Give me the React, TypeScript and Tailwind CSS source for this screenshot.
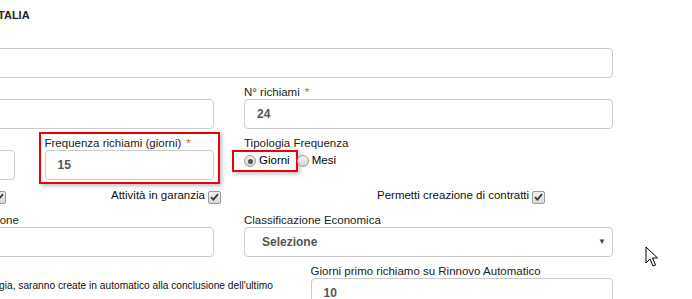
import React from 'react';

const Label = ({ children, req }: { children: React.ReactNode; req?: boolean }) => (
  <div className="text-[11.5px] leading-[14px] text-[#222] whitespace-nowrap">
    {children}
    {req && <span className="ml-[5px] text-[#f0474b]">*</span>}
  </div>
);

const Field = ({ value = '' }: { value?: string }) => (
  <input
    readOnly
    value={value}
    className="block w-full h-[30px] border border-[#ccc] rounded-[4px] bg-white px-[12px] text-[12px] font-bold text-[#555] outline-none"
  />
);

const Check = () => (
  <span className="inline-flex items-center justify-center w-[13px] h-[13px] border border-[#9a9a9a] rounded-[2px] bg-gradient-to-b from-[#f2f2f2] to-[#d8d8d8] align-[-2px] ml-[3px]">
    <svg width="9" height="8" viewBox="0 0 9 8">
      <path d="M1 4.2 L3.4 6.6 L8 1.2" fill="none" stroke="#3a3a3a" strokeWidth="1.8" />
    </svg>
  </span>
);

const Radio = ({ on }: { on?: boolean }) => (
  <span className="inline-flex items-center justify-center w-[12px] h-[12px] rounded-full border border-[#9a9a9a] bg-gradient-to-b from-[#f4f4f4] to-[#d6d6d6]">
    {on && <span className="w-[5px] h-[5px] rounded-full bg-[#555]" />}
  </span>
);

export default function App() {
  return (
    <div className="relative w-[692px] h-[299px] overflow-hidden bg-white font-['Liberation_Sans',Arial,sans-serif]">
      <div className="ml-[-170px] w-[798px]">
        {/* intestazione */}
        <div className="h-[48px] pt-[7px] pl-[165px] text-[11px] font-bold text-[#222]">ITALIA</div>

        <div className="px-[15px]">
          <Field />
        </div>

        <div className="grid grid-cols-12 mt-[7px]">
          <div className="col-span-6 px-[15px]">
            <Label>Descrizione</Label>
            <Field />
          </div>
          <div className="col-span-6 px-[15px]">
            <Label req>N° richiami</Label>
            <Field value="24" />
          </div>
        </div>

        <div className="grid grid-cols-12 mt-[7px]">
          <div className="col-span-3 px-[15px]">
            <Label>Durata</Label>
            <Field />
          </div>
          <div className="col-span-3 px-[15px]">
            <div className="-mx-[6px] -mt-[4px] px-[4px] pt-[2px] pb-[2px] border-2 border-[#e8000b] shadow-[2px_2px_4px_rgba(0,0,0,0.25)]">
              <Label req>Frequenza richiami (giorni)</Label>
              <Field value="15" />
            </div>
          </div>
          <div className="col-span-6 px-[15px]">
            <Label>Tipologia Frequenza</Label>
            <div className="flex items-center text-[11.5px] text-black">
              <span className="flex items-center gap-[3px] ml-[-12px] pl-[10px] pr-[6px] h-[22px] border-2 border-[#e8000b] shadow-[2px_2px_4px_rgba(0,0,0,0.25)]">
                <Radio on />
                <span>Giorni</span>
              </span>
              <span className="flex items-center gap-[3px] ml-[-1px]">
                <Radio />
                <span>Mesi</span>
              </span>
            </div>
          </div>
        </div>

        <div className="grid grid-cols-12 mt-[4px] text-[11.5px] leading-[14px] text-[#111]">
          <div className="col-span-4 px-[15px] whitespace-nowrap">
            Richiede approvazione capo
            <Check />
          </div>
          <div className="col-span-4 px-[15px] whitespace-nowrap">
            Attività in garanzia
            <Check />
          </div>
          <div className="col-span-4 px-[15px] whitespace-nowrap">
            Permetti creazione di contratti
            <Check />
          </div>
        </div>

        <div className="grid grid-cols-12 mt-[9px]">
          <div className="col-span-6 px-[15px]">
            <Label>Classificazione della Destinazione</Label>
            <Field />
          </div>
          <div className="col-span-6 px-[15px]">
            <Label>Classificazione Economica</Label>
            <div className="relative h-[30px] border border-[#ccc] rounded-[4px] bg-white pl-[17px] flex items-center text-[12px] font-bold text-[#555]">
              Selezione
              <span className="absolute right-[6px] top-[8px] text-[8px] text-[#444]">▼</span>
            </div>
          </div>
        </div>

        <div className="grid grid-cols-12 mt-[7px]">
          <div className="col-span-7 px-[15px] pt-[15px] text-[10.2px] leading-[14px] text-[#111] whitespace-nowrap">
            Se attivo le attività di questa tipologia, saranno create in automatico alla conclusione dell'ultimo
            <br />
            richiamo del contratto
            <Check />
          </div>
          <div className="col-span-5 px-[15px]">
            <Label>Giorni primo richiamo su Rinnovo Automatico</Label>
            <Field value="10" />
          </div>
        </div>
      </div>

      {/* puntatore del mouse */}
      <svg className="absolute left-[645px] top-[246px]" width="14" height="22" viewBox="0 0 14 22">
        <path d="M1 1 L1 17 L5 13 L8 20 L10.5 19 L7.5 12 L12.5 12 Z" fill="#fff" stroke="#000" strokeWidth="1" strokeLinejoin="round" />
      </svg>
    </div>
  );
}
